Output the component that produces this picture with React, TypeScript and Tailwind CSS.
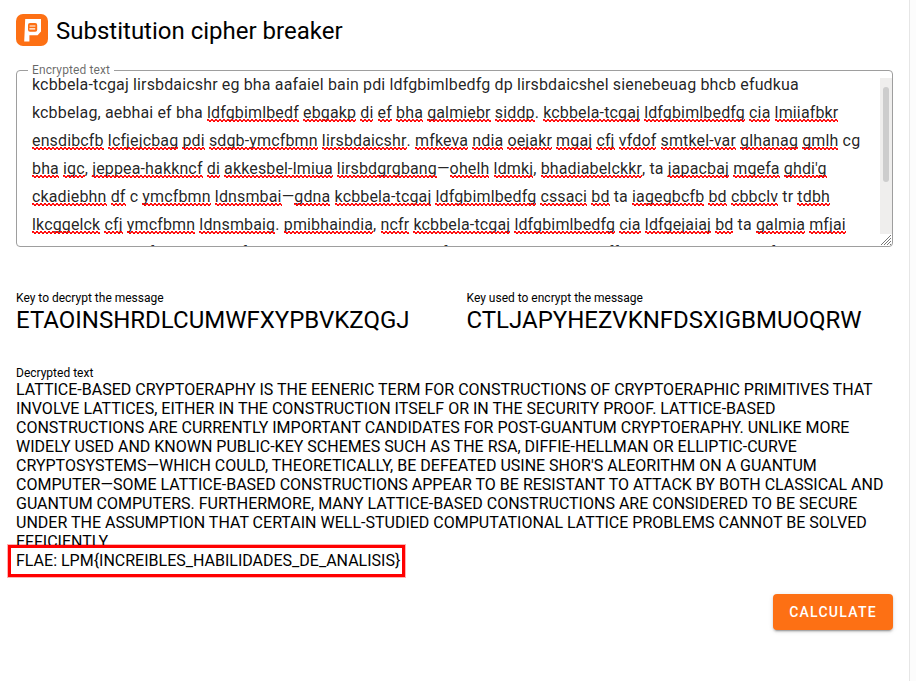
const encrypted: { plain?: string; checked?: string }[] = [
  { plain: "kcbbela-tcgaj lirsbdaicshr eg bha aafaiel bain pdi ldfgbimlbedfg dp lirsbdaicshel sienebeuag bhcb efudkua" },
  { plain: "kcbbelag, aebhai ef bha ", checked: "ldfgbimlbedf ebgakp di ef bha galmiebr siddp. kcbbela-tcgaj ldfgbimlbedfg cia lmiiafbkr" },
  { checked: "ensdibcfb lcfjejcbag pdi sdgb-ymcfbmn lirsbdaicshr. mfkeva ndia oejakr mgaj cfj vfdof smtkel-var glhanag gmlh cg" },
  { checked: "bha igc, jeppea-hakkncf di akkesbel-lmiua lirsbdgrgbang—ohelh ldmkj, bhadiabelckkr, ta japacbaj mgefa ghdi'g" },
  { checked: "ckadiebhn df c ymcfbmn ldnsmbai—gdna kcbbela-tcgaj ldfgbimlbedfg cssaci bd ta iagegbcfb bd cbbclv tr tdbh" },
  { checked: "lkcggelck cfj ymcfbmn ldnsmbaig. pmibhaindia, ncfr kcbbela-tcgaj ldfgbimlbedfg cia ldfgejaiaj bd ta galmia mfjai" },
  { plain: "bha cggmnsbedf bhcb laibcef oakk-gbmjeaj ldnsmbcbedfck kcbbela sidtkang lcffdb ta gdkuaj appeleafbkr." },
];

const decrypted = [
  "LATTICE-BASED CRYPTOERAPHY IS THE EENERIC TERM FOR CONSTRUCTIONS OF CRYPTOERAPHIC PRIMITIVES THAT",
  "INVOLVE LATTICES, EITHER IN THE CONSTRUCTION ITSELF OR IN THE SECURITY PROOF. LATTICE-BASED",
  "CONSTRUCTIONS ARE CURRENTLY IMPORTANT CANDIDATES FOR POST-GUANTUM CRYPTOERAPHY. UNLIKE MORE",
  "WIDELY USED AND KNOWN PUBLIC-KEY SCHEMES SUCH AS THE RSA, DIFFIE-HELLMAN OR ELLIPTIC-CURVE",
  "CRYPTOSYSTEMS—WHICH COULD, THEORETICALLY, BE DEFEATED USINE SHOR'S ALEORITHM ON A GUANTUM",
  "COMPUTER—SOME LATTICE-BASED CONSTRUCTIONS APPEAR TO BE RESISTANT TO ATTACK BY BOTH CLASSICAL AND",
  "GUANTUM COMPUTERS. FURTHERMORE, MANY LATTICE-BASED CONSTRUCTIONS ARE CONSIDERED TO BE SECURE",
  "UNDER THE ASSUMPTION THAT CERTAIN WELL-STUDIED COMPUTATIONAL LATTICE PROBLEMS CANNOT BE SOLVED",
];

const ignored = new Set(["cg", "ta", "c", "tr", ""]);

function Checked({ text }: { text: string }) {
  return (
    <>
      {text.split(/([\s,.—]+)/).map((part, i) =>
        i % 2 === 1 || ignored.has(part) ? (
          part
        ) : (
          <span
            key={i}
            className="relative after:absolute after:inset-x-0 after:bottom-0 after:h-[3px] after:[background:linear-gradient(90deg,#f00_50%,transparent_50%)_0_0/4px_1px_repeat-x,linear-gradient(#f00d,#f00d)_0_1px/4px_1px_repeat-x,linear-gradient(90deg,transparent_50%,#f00_50%)_0_2px/4px_1px_repeat-x] after:content-['']"
          >
            {part}
          </span>
        ),
      )}
    </>
  );
}

function Logo() {
  return (
    <svg width="32" height="32" viewBox="0 0 32 32" className="shrink-0">
      <rect width="32" height="32" rx="7" fill="#fd7014" />
      <path d="M9.2 5H25V17.5L21.6 21.2H13.4V27.6H8.2Z" fill="#fff" />
      <rect x="12" y="9" width="9.2" height="8.8" rx="2" fill="#fd7014" />
      <path d="M13.6 12H19.4M13.4 14.9H19.2" stroke="#fff" strokeWidth="1.2" />
    </svg>
  );
}

function KeyField({ label, value }: { label: string; value: string }) {
  return (
    <div className="w-[450.5px] shrink-0">
      <div className="h-[15px] text-xs leading-[15px]">{label}</div>
      <div className="text-2xl leading-[29px]">{value}</div>
    </div>
  );
}

export default function App() {
  return (
    <div className="flex h-[681px] w-[916px] overflow-hidden bg-white font-[Roboto,sans-serif] text-black">
      <main className="w-[909px] shrink-0 pr-4 pl-4">
        <header className="flex h-[63px] items-center gap-2 pb-[3px]">
          <Logo />
          <h1 className="pt-0.5 text-2xl leading-8">Substitution cipher breaker</h1>
        </header>

        <fieldset className="h-[184px] w-[877px] rounded border border-[#9e9e9e]">
          <legend className="ml-[11px] h-[14px] w-[86px] pl-1 text-xs leading-[14px] tracking-[0.11px] whitespace-nowrap text-black/60">Encrypted text</legend>
          <div className="flex h-[169px] overflow-hidden pl-[15px]">
            <div className="-mt-1.5 w-[848px] shrink-0 text-base leading-7 tracking-[0.15px] whitespace-pre text-black/87">
              {encrypted.map((line, i) => (
                <div key={i} className={line.checked ? "tracking-[0.145px]" : undefined}>
                  {line.plain}
                  {line.checked && <Checked text={line.checked} />}
                </div>
              ))}
            </div>
            <div className="w-3 shrink-0 pt-px">
              <div className="h-[156px] bg-[#efeeed] px-[3px] pt-[9px]">
                <div className="h-[95px] rounded-full bg-[#cdcdcd]" />
              </div>
              <svg width="12" height="12" viewBox="0 0 12 12" stroke="#777" strokeWidth="1">
                <path d="M1 11L11 1M4 11L11 4M7 11L11 7M10 11L11 10" />
              </svg>
            </div>
          </div>
        </fieldset>

        <section className="mt-11 flex h-[75px]">
          <KeyField label="Key to decrypt the message" value="ETAOINSHRDLCUMWFXYPBVKZQGJ" />
          <KeyField label="Key used to encrypt the message" value="CTLJAPYHEZVKNFDSXIGBMUOQRW" />
        </section>

        <section className="whitespace-nowrap">
          <div className="h-[14px] text-xs leading-[15px]">Decrypted text</div>
          <div className="text-base leading-[19px] tracking-[0.004px]">
            {decrypted.map((line) => (
              <div key={line}>{line}</div>
            ))}
            <div className="h-[13px] overflow-hidden">EFFICIENTLY.</div>
          </div>
          <div className="-ml-2 flex h-8 w-[397px] items-center border-[3px] border-[#ff0000] pb-px pl-[5px] text-base leading-[19px] shadow-[0_0_0_1px_rgba(255,0,0,.3)]">
            FLAE: LPM&#123;INCREIBLES_HABILIDADES_DE_ANALISIS&#125;
          </div>
        </section>

        <div className="mt-[17px] flex justify-end">
          <button className="h-9 w-[120px] rounded bg-[#fd7014] text-sm font-medium tracking-[1.25px] text-white shadow-[0_3px_1px_-2px_rgba(0,0,0,.2),0_2px_2px_0_rgba(0,0,0,.14),0_1px_5px_0_rgba(0,0,0,.12)]">
            CALCULATE
          </button>
        </div>
      </main>
      <div className="flex-1 border-l border-[#e6e6e6] bg-[#fcfcfc]" />
    </div>
  );
}
